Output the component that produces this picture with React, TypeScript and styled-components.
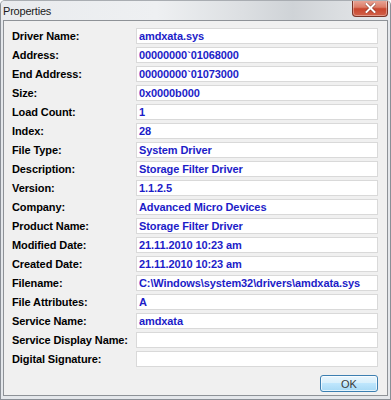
import React from "react";
import styled, { createGlobalStyle } from "styled-components";

const Global = createGlobalStyle`
  html, body { margin: 0; padding: 0; background: #ffffff; }
  #root { width: 391px; height: 400px; }
`;

const Window = styled.div`
  width: 391px;
  height: 400px;
  box-sizing: border-box;
  display: flex;
  flex-direction: column;
  background: #e4e7eb;
  border: 1px solid #8a8f96;
  border-top-color: #a9adb2;
  border-radius: 5px 5px 0 0;
  overflow: hidden;
  font-family: "Liberation Sans", Arial, sans-serif;
`;

const TitleBar = styled.div`
  height: 19px;
  flex: none;
  display: flex;
  align-items: center;
  justify-content: space-between;
  padding-left: 2px;
  background: linear-gradient(
    to right,
    #e9ebee 0%,
    #eef0f2 40%,
    #dcdfe2 62%,
    #cfd3d7 75%,
    #dadde0 86%,
    #e6e8eb 100%
  );
`;

const Title = styled.span`
  font-size: 11px;
  color: #1b1b1b;
  letter-spacing: -0.2px;
  padding-top: 1px;
`;

const CloseButton = styled.div`
  width: 36px;
  height: 17px;
  margin-right: 2px;
  align-self: flex-start;
  margin-top: -1px;
  box-sizing: border-box;
  display: flex;
  align-items: center;
  justify-content: center;
  border: 1px solid #7a3528;
  border-top: none;
  border-radius: 0 0 4px 4px;
  background: linear-gradient(
    to bottom,
    #e9a99b 0%,
    #dc7c67 45%,
    #c9452d 55%,
    #d1624a 100%
  );
  box-shadow: inset 0 0 0 1px rgba(255, 255, 255, 0.35);
`;

const Client = styled.div`
  flex: 1;
  margin: 0 2px 3px 2px;
  box-sizing: border-box;
  background: #f0f0f0;
  border: 1px solid #8e9297;
  padding: 7px 9px 0 8px;
  display: flex;
  flex-direction: column;
`;

const Rows = styled.div`
  display: flex;
  flex-direction: column;
  gap: 3px;
`;

const Row = styled.div`
  display: grid;
  grid-template-columns: 124px 242px;
  align-items: center;
  height: 16px;
`;

const Label = styled.span`
  font-size: 11px;
  font-weight: bold;
  color: #000;
  white-space: nowrap;
  letter-spacing: -0.1px;
`;

const Field = styled.div`
  height: 16px;
  box-sizing: border-box;
  background: #ffffff;
  border: 1px solid #d9d9d9;
  padding-left: 2px;
  display: flex;
  align-items: center;
  font-size: 11px;
  font-weight: bold;
  color: #1c1cc8;
  white-space: nowrap;
  overflow: hidden;
  letter-spacing: -0.1px;
`;

const Footer = styled.div`
  display: flex;
  justify-content: flex-end;
  padding-top: 8px;
`;

const OkButton = styled.button`
  width: 58px;
  height: 17px;
  box-sizing: border-box;
  border: 1px solid #3c7fb1;
  border-radius: 3px;
  background: linear-gradient(to bottom, #eaf6fd 0%, #d9f0fc 45%, #bee6fd 50%, #a7d9f5 100%);
  box-shadow: inset 0 0 0 1px rgba(255, 255, 255, 0.7);
  font-family: "Liberation Sans", Arial, sans-serif;
  font-size: 11px;
  color: #3a3a3a;
  padding: 0;
  line-height: 14px;
`;

const rows: [string, string][] = [
  ["Driver Name:", "amdxata.sys"],
  ["Address:", "00000000`01068000"],
  ["End Address:", "00000000`01073000"],
  ["Size:", "0x0000b000"],
  ["Load Count:", "1"],
  ["Index:", "28"],
  ["File Type:", "System Driver"],
  ["Description:", "Storage Filter Driver"],
  ["Version:", "1.1.2.5"],
  ["Company:", "Advanced Micro Devices"],
  ["Product Name:", "Storage Filter Driver"],
  ["Modified Date:", "21.11.2010 10:23 am"],
  ["Created Date:", "21.11.2010 10:23 am"],
  ["Filename:", "C:\\Windows\\system32\\drivers\\amdxata.sys"],
  ["File Attributes:", "A"],
  ["Service Name:", "amdxata"],
  ["Service Display Name:", ""],
  ["Digital Signature:", ""],
];

export default function App() {
  return (
    <>
      <Global />
      <Window>
        <TitleBar>
          <Title>Properties</Title>
          <CloseButton>
            <svg width="11" height="10" viewBox="0 0 11 10">
              <path
                d="M1.5 1 L9.5 9 M9.5 1 L1.5 9"
                stroke="#5a1e14"
                strokeWidth="3.2"
                strokeLinecap="square"
                opacity="0.55"
              />
              <path
                d="M1.5 1 L9.5 9 M9.5 1 L1.5 9"
                stroke="#ffffff"
                strokeWidth="2"
                strokeLinecap="square"
              />
            </svg>
          </CloseButton>
        </TitleBar>
        <Client>
          <Rows>
            {rows.map(([label, value]) => (
              <Row key={label}>
                <Label>{label}</Label>
                <Field>{value}</Field>
              </Row>
            ))}
          </Rows>
          <Footer>
            <OkButton>OK</OkButton>
          </Footer>
        </Client>
      </Window>
    </>
  );
}
